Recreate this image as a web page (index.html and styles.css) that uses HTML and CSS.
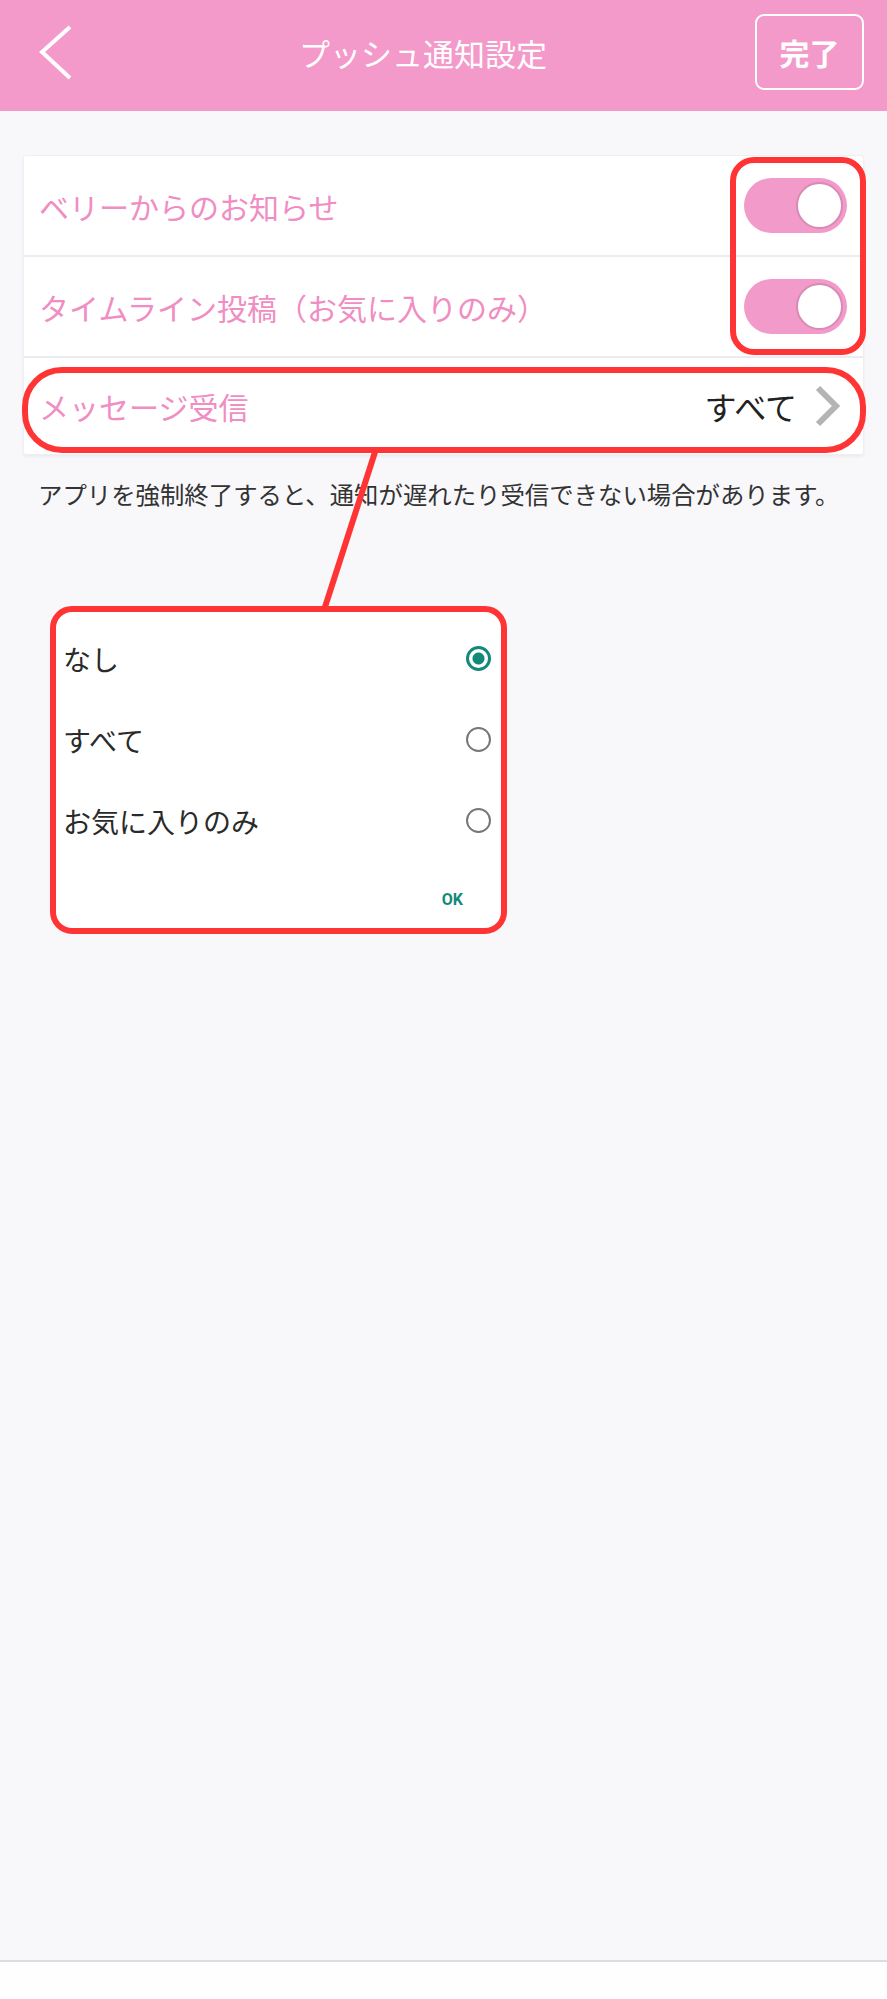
FILE: index.html
```html
<!DOCTYPE html>
<html lang="ja">
  <head>
    <meta charset="UTF-8" />
    <meta name="viewport" content="width=device-width, initial-scale=1.0" />
    <title>プッシュ通知設定</title>
    <link rel="stylesheet" href="styles.css">
  </head>
  <body>
    <div class="page">
      <header class="topbar">
        <button type="button" class="back-btn" aria-label="戻る">
          <svg width="34" height="56" viewBox="0 0 34 56">
            <polyline points="31,2 3,27 31,53" fill="none" stroke="#fff" stroke-width="4" />
          </svg>
        </button>
        <h1 class="title">プッシュ通知設定</h1>
        <button type="button" class="done-btn">完了</button>
      </header>

      <main class="content">
        <!-- settings list -->
        <div class="settings">
          <div class="row">
            <span class="label">ベリーからのお知らせ</span>
            <span class="toggle on"><span class="knob"></span></span>
          </div>
          <div class="row">
            <span class="label">タイムライン投稿（お気に入りのみ）</span>
            <span class="toggle on"><span class="knob"></span></span>
          </div>
          <div class="row">
            <span class="label">メッセージ受信</span>
            <span class="value">すべて</span>
            <svg class="chevron" width="28" height="42" viewBox="0 0 28 42">
              <polyline points="5,3 23,21 5,39" fill="none" stroke="#b4b4b4" stroke-width="6" />
            </svg>
          </div>
        </div>

        <p class="note">アプリを強制終了すると、通知が遅れたり受信できない場合があります。</p>

        <!-- message receive choices -->
        <div class="choice-dialog">
          <label class="choice">
            <span>なし</span>
            <span class="radio checked"></span>
          </label>
          <label class="choice">
            <span>すべて</span>
            <span class="radio"></span>
          </label>
          <label class="choice">
            <span>お気に入りのみ</span>
            <span class="radio"></span>
          </label>
          <div class="dialog-actions">
            <button type="button" class="ok-btn">OK</button>
          </div>
        </div>

        <!-- red callouts -->
        <div class="callout callout-toggles"></div>
        <div class="callout callout-message"></div>
        <svg class="callout-line" width="887" height="520" viewBox="0 0 887 520">
          <line x1="376" y1="338" x2="325" y2="496" stroke="#ff3535" stroke-width="6" />
        </svg>
      </main>

      <footer class="bottombar"></footer>
    </div>
  </body>
</html>
```

FILE: styles.css
```css
* {
  box-sizing: border-box;
}

body {
  margin: 0;
  font-family: "Noto Sans CJK JP", "Noto Sans", sans-serif;
  color: #333;
}

.page {
  display: flex;
  flex-direction: column;
  min-height: 1999px;
  background-color: #f8f8fb;
}

/* header */
.topbar {
  display: flex;
  align-items: center;
  height: 111px;
  padding: 0 23px 0 39px;
  background-color: #f49aca;
}

.back-btn {
  display: flex;
  padding: 0;
  border: none;
  background: none;
  margin-top: -6px;
}

.title {
  flex: 1;
  margin: 0;
  padding-left: 18px;
  padding-bottom: 6px;
  text-align: center;
  font-size: 31px;
  font-weight: normal;
  color: #fff;
}

.done-btn {
  width: 109px;
  height: 76px;
  margin-top: -8px;
  border: 2px solid #fff;
  border-radius: 9px;
  background: none;
  color: #fff;
  font-family: inherit;
  font-size: 30px;
  font-weight: bold;
}

/* content */
.content {
  position: relative;
  flex: 1;
  padding-top: 44px;
}

.settings {
  margin: 0 23px;
  background-color: #fff;
  border: 1px solid #efeff3;
  border-radius: 3px;
  box-shadow: 0 2px 3px rgba(0, 0, 0, 0.05);
}

.row {
  display: flex;
  align-items: center;
  height: 101px;
  padding: 0 16px 0 15px;
  border-bottom: 2px solid #ececf0;
}

.row:last-child {
  height: 96px;
  border-bottom: none;
  padding-right: 22px;
}

.label {
  flex: 1;
  font-size: 30px;
  color: #f08dc2;
}

.value {
  font-size: 32px;
  color: #222;
  margin-right: 16px;
}

.toggle {
  position: relative;
  width: 103px;
  height: 55px;
  border-radius: 28px;
  background-color: #f29ac9;
}

.toggle .knob {
  position: absolute;
  top: 4px;
  right: 4px;
  width: 47px;
  height: 47px;
  border-radius: 50%;
  background-color: #fff;
  border: 2px solid #d88ab4;
}

.note {
  margin: 22px 0 0 38px;
  font-size: 24.4px;
  line-height: 34px;
  color: #333;
}

/* choice dialog */
.choice-dialog {
  width: 457px;
  height: 328px;
  margin: 95px 0 0 50px;
  padding: 6px 10px 0 7px;
  background-color: #fff;
  border: 6px solid #ff3535;
  border-radius: 22px;
}

.choice {
  display: flex;
  align-items: center;
  justify-content: space-between;
  height: 81px;
  font-size: 28px;
  color: #2a2a2a;
}

.radio {
  width: 25px;
  height: 25px;
  border-radius: 50%;
  border: 2.5px solid #777;
}

.radio.checked {
  border: 3px solid #13897a;
  background: radial-gradient(circle, #13897a 0 5.5px, #fff 6.5px);
}

.dialog-actions {
  display: flex;
  justify-content: flex-end;
  margin-top: 18px;
  padding-right: 28px;
}

.ok-btn {
  height: 40px;
  padding: 0;
  border: none;
  background: none;
  font-family: "Roboto", "Liberation Sans", sans-serif;
  font-size: 16px;
  font-weight: bold;
  color: #13897a;
}

/* red callouts */
.callout {
  position: absolute;
  border: 6px solid #ff3535;
}

.callout-toggles {
  top: 46px;
  left: 730px;
  width: 136px;
  height: 198px;
  border-radius: 24px;
}

.callout-message {
  top: 256px;
  left: 22px;
  width: 844px;
  height: 86px;
  border-radius: 40px;
}

.callout-line {
  position: absolute;
  top: 0;
  left: 0;
}

/* bottom bar */
.bottombar {
  height: 39px;
  border-top: 2px solid #dcdce0;
  background-color: #fefefe;
}
```
